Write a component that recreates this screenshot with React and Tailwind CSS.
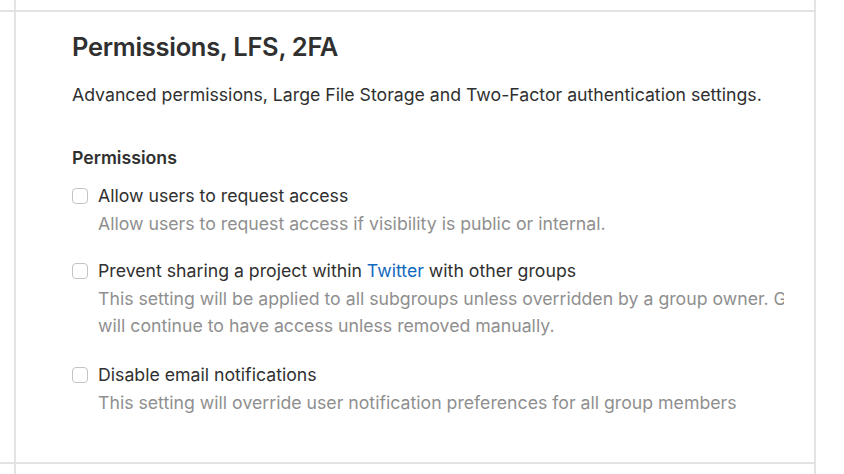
export default function App() {
    return (
        <div className="w-[844px] h-[474px] bg-white flex overflow-hidden font-['Inter','Noto_Sans',sans-serif]">
            {/* left gutter */}
            <div className="w-[14px] shrink-0 flex flex-col">
                <div className="h-[10px]" />
                <div className="h-[2px] bg-[#e3e3e3]" />
                <div className="h-[450px]" />
                <div className="h-[2px] bg-[#e3e3e3]" />
            </div>
            <div className="w-[2px] shrink-0 bg-[#e3e3e3]" />

            {/* main column */}
            <div className="w-[798px] shrink-0 flex flex-col">
                <div className="h-[10px]" />
                <div className="h-[2px] bg-[#e3e3e3]" />
                <div className="h-[450px] pl-[56px] pr-[30px]">
                    <div className="overflow-hidden h-full">
                        <h2 className="text-[25.5px] leading-[32px] font-semibold tracking-[-0.3px] text-[#303030] pt-[19px]">
                            Permissions, LFS, 2FA
                        </h2>
                        <p className="text-[17.7px] leading-[28px] text-[#303030] mt-[18px] whitespace-nowrap">
                            Advanced permissions, Large File Storage and Two-Factor authentication settings.
                        </p>

                        <h4 className="text-[17.7px] leading-[28px] font-semibold text-[#303030] mt-[35px]">
                            Permissions
                        </h4>

                        {/* Allow access */}
                        <div className="flex mt-[10px]">
                            <div className="w-[26px] shrink-0 pt-[6px]">
                                <div className="w-[16px] h-[16px] rounded-[4px] border border-[#c4c4c4] bg-white" />
                            </div>
                            <div className="whitespace-nowrap">
                                <div className="text-[17.7px] leading-[28px] text-[#303030]">Allow users to request access</div>
                                <div className="text-[17.7px] leading-[27px] text-[#8f8f8f]">
                                    Allow users to request access if visibility is public or internal.
                                </div>
                            </div>
                        </div>

                        {/* Prevent sharing */}
                        <div className="flex mt-[20px]">
                            <div className="w-[26px] shrink-0 pt-[6px]">
                                <div className="w-[16px] h-[16px] rounded-[4px] border border-[#c4c4c4] bg-white" />
                            </div>
                            <div className="whitespace-nowrap min-w-0">
                                <div className="text-[17.7px] leading-[28px] text-[#303030]">
                                    Prevent sharing a project within <span className="text-[#1068bf]">Twitter</span> with other groups
                                </div>
                                <div className="text-[17.7px] leading-[27px] text-[#8f8f8f]">
                                    This setting will be applied to all subgroups unless overridden by a group owner. Groups that already have access to the project
                                </div>
                                <div className="text-[17.7px] leading-[28px] text-[#8f8f8f]">
                                    will continue to have access unless removed manually.
                                </div>
                            </div>
                        </div>

                        {/* Disable email */}
                        <div className="flex mt-[21px]">
                            <div className="w-[26px] shrink-0 pt-[6px]">
                                <div className="w-[16px] h-[16px] rounded-[4px] border border-[#c4c4c4] bg-white" />
                            </div>
                            <div className="whitespace-nowrap">
                                <div className="text-[17.7px] leading-[28px] text-[#303030]">Disable email notifications</div>
                                <div className="text-[17.7px] leading-[27px] text-[#8f8f8f]">
                                    This setting will override user notification preferences for all group members
                                </div>
                            </div>
                        </div>
                    </div>
                </div>
                <div className="h-[2px] bg-[#e3e3e3]" />
            </div>
            <div className="w-[2px] shrink-0 bg-[#e3e3e3]" />
        </div>
    );
}
